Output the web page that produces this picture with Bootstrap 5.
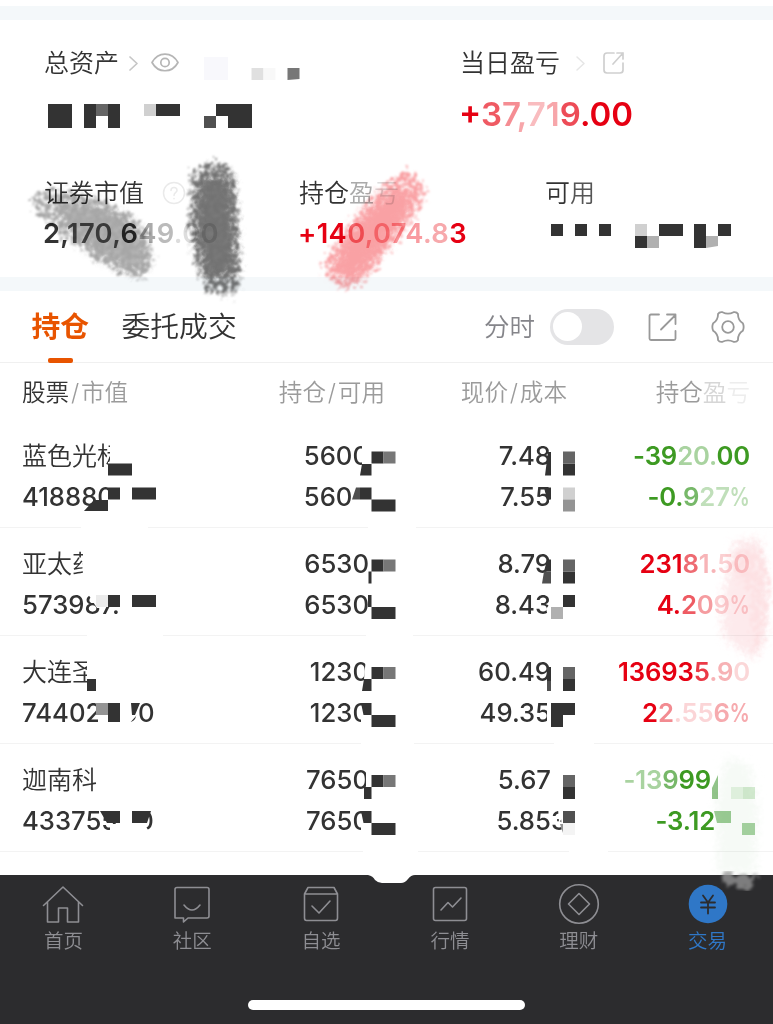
<!DOCTYPE html>
<html lang="zh-CN">
<head>
<meta charset="utf-8">
<meta name="viewport" content="width=device-width, initial-scale=1">
<title>持仓</title>
<link href="https://cdn.jsdelivr.net/npm/bootstrap@5.3.0/dist/css/bootstrap.min.css" rel="stylesheet">
<style>
body{width:773px;height:1024px;overflow:hidden;background:#fff;color:#333;font-family:Inter,"Noto Sans CJK SC",sans-serif;font-weight:350}
.screen{height:1024px;overflow:hidden}
.band{height:14px;background:#f4f8fa}
.assets{height:257px}
.lbl{font-size:25px;line-height:36px;height:36px;white-space:nowrap}
.amt{font-size:27.3px;font-weight:600;line-height:36px;white-space:nowrap;letter-spacing:.35px;margin-left:-1px}
.big{font-size:33px;line-height:40px;letter-spacing:0}
.up{color:#e60012}.down{color:#3d9a22}
.tabs{height:72px;border-bottom:1px solid #f0f0f0}
.tab{font-size:28.8px;line-height:74px}
.tab.on{color:#e85400;font-weight:600}
.tab.on::after{content:"";position:absolute;left:16px;bottom:1px;width:25px;height:5px;border-radius:2px;background:#e85400}
.minute{font-size:25.5px;color:#85858a;line-height:74px}
.knob{width:64px;height:36px;border-radius:18px;background:#e4e4e6;padding:3.5px 3px}
.knob::before{content:"";display:block;width:29px;height:29px;border-radius:50%;background:#fff}
.cols{display:grid;grid-template-columns:201px 162px 182px 183px;padding-left:22px;white-space:nowrap}
.heads{height:57px;font-size:23.6px;line-height:59px;color:#9b9b9b}
.heads i{font-style:normal;padding:0 1.8px}
.hold{height:107.9px;border-bottom:1px solid #f3f3f3;padding-top:16.4px;font-size:25.7px;font-weight:550;line-height:40.6px}
.hold .nm{font-size:25px;font-weight:350}
.num{text-align:right}
.up,.down{font-weight:600}
.num.up,.num.down{letter-spacing:-.15px}
.pc{display:inline-block;transform:scaleX(.79);transform-origin:right;margin-left:-5.5px}
.tabbar{height:149px;background:#2c2c2e;color:#8e8e93}
.tabbar svg{width:44px;height:44px}
.tabbar .item{padding-top:6.5px;font-size:19.5px;line-height:30px;position:relative;left:-1px}
.tabbar .now{color:#2f77c7}
.homebar{width:277px;height:9.5px;border-radius:5px;background:#fff;left:248px;top:1000px}
.marks{left:0;top:0;z-index:5;pointer-events:none}
.wash{mix-blend-mode:multiply;z-index:6}
svg{fill:none;stroke-linecap:round;stroke-linejoin:round}
</style>
<script src="https://cdn.jsdelivr.net/npm/bootstrap@5.3.0/dist/js/bootstrap.bundle.min.js"></script>
</head>
<body>
<div class="screen position-relative d-flex flex-column">
  <div style="height:6px"></div>
  <div class="band"></div>
  <section class="assets">
    <div class="d-flex" style="padding:25px 0 0 44px;height:133px">
      <div style="width:416px">
        <div class="lbl d-flex align-items-center"><span>总资产</span>
          <svg width="12" height="20" viewBox="0 0 12 20" stroke="#c6c6c6" stroke-width="1.7" style="margin-left:9px"><path d="M2 4l7 6.500-7 6.500"/></svg>
          <svg width="30" height="24" viewBox="0 0 30 24" stroke="#b5b5b5" stroke-width="1.7" style="margin-left:10px"><path d="M2 11.500C8 .2 22 .2 28 11.500C22 22.500 8 22.500 2 11.500z"/><circle cx="15" cy="11.500" r="4.200"/></svg>
        </div>
      </div>
      <div>
        <div class="lbl d-flex align-items-center"><span>当日盈亏</span>
          <svg width="12" height="20" viewBox="0 0 12 20" stroke="#e6e6e6" stroke-width="1.500" style="margin-left:15px"><path d="M2 4l7 6.500-7 6.500"/></svg>
          <svg width="24" height="24" viewBox="0 0 24 24" stroke="#cfcfcf" stroke-width="1.700" style="margin-left:15px"><path d="M12 2H5Q2 2 2 5V19Q2 22 5 22H18Q21 22 21 19V12M11 13L21 2M15 2h6v6"/></svg>
        </div>
        <div class="amt big up" style="margin-top:13px"><span>+</span><span style="color:#ef5a63">3</span><span style="color:#f58d93">7</span><span style="color:#f7a6aa">,</span><span style="color:#f9bcbf">7</span><span style="color:#f7a6aa">1</span><span style="color:#ed4c57">9</span>.00</div>
      </div>
    </div>
    <div class="d-flex" style="padding:22px 0 0 44px">
      <div style="width:255px">
        <div class="lbl d-flex align-items-center">证券市值
          <svg width="24" height="24" viewBox="0 0 24 24" stroke="#eaeaea" stroke-width="1.500" style="margin-left:18px"><circle cx="12" cy="12" r="10.500"/><path d="M9 9.500c0-4 6-4 6 0c0 2-3 2-3 5M12 17.500v.3"/></svg></div>
        <div class="amt" style="margin-top:5px">2,<span style="color:#555">170,</span>6<span style="color:#aaa">4</span><span style="color:#bbb">9</span><span style="color:#ddd">.00</span></div>
      </div>
      <div style="width:246px">
        <div class="lbl">持仓<span style="color:#aaa">盈</span><span style="color:#ddd">亏</span></div>
        <div class="amt up" style="margin-top:5px">+14<span style="color:#f4757c">0</span><span style="color:#f99ba0">,074</span><span style="color:#f7a9ac">.8</span>3</div>
      </div>
      <div class="lbl">可<span style="color:#555">用</span></div>
    </div>
  </section>
  <div class="band"></div>
  <nav class="tabs d-flex align-items-center">
    <div class="tab on position-relative" style="margin-left:31.500px;width:90px">持仓</div>
    <div class="tab" style="width:362.500px">委托成交</div>
    <div class="minute">分时</div>
    <div class="knob" style="margin-left:15px"></div>
    <svg width="32" height="32" viewBox="0 0 32 32" stroke="#999" stroke-width="1.800" style="margin-left:33px"><path d="M12 3.500H4Q2.500 3.500 2.500 5V27.500Q2.500 29 4 29H27Q28.500 29 28.500 27.500V20M14 18.500L28.500 4M20 3.500h8.500V13"/></svg>
    <svg width="34" height="34" viewBox="0 0 34 34" stroke="#999" stroke-width="1.800" style="margin-left:31.500px"><path d="M7 4Q8.500 1.500 11.500 2.200Q17 5 22.500 2.200Q25.500 1.500 27 4Q26.800 10 31.800 13.200Q33.500 17 31.800 20.800Q26.800 24 27 30Q25.500 32.500 22.500 31.800Q17 29 11.500 31.800Q8.500 32.500 7 30Q7.200 24 2.200 20.800Q.5 17 2.200 13.200Q7.200 10 7 4z"/><circle cx="17" cy="17" r="5.800"/></svg>
  </nav>
  <div class="cols heads">
    <div><span style="color:#333">股票</span><i>/</i>市值</div>
    <div class="num">持仓<i>/</i>可用</div>
    <div class="num">现价<i>/</i>成本</div>
    <div class="num">持仓<span style="color:#d6d6d6">盈</span><span style="color:#ededed">亏</span></div>
  </div>
  <div class="cols hold">
    <div><div class="nm">蓝色光标</div><div>418880</div></div>
    <div class="num" style="padding-right:16px"><div>5600</div><div>5600</div></div>
    <div class="num" style="padding-right:16px"><div>7.48</div><div>7.55</div></div>
    <div class="num down"><div>-39<span style="color:#a9d3a0">20.</span>00</div><div>-0.<span style="color:#77b869">9</span><span style="color:#c0dfba">27<span class="pc">%</span></span></div></div>
  </div>
  <div class="cols hold">
    <div><div class="nm">亚太药</div><div>573987.</div></div>
    <div class="num" style="padding-right:16px"><div>6530</div><div>6530</div></div>
    <div class="num" style="padding-right:16px"><div>8.79</div><div>8.43</div></div>
    <div class="num up"><div>231<span style="color:#ee6b72">8</span><span style="color:#f7b4b7">1.</span><span style="color:#fbd0d2">50</span></div><div>4.<span style="color:#ee5b63">2</span><span style="color:#f59ca0">0</span><span style="color:#fbd0d2">9<span class="pc">%</span></span></div></div>
  </div>
  <div class="cols hold">
    <div><div class="nm">大连圣</div><div>74402<span style="margin-left:20px">00</span></div></div>
    <div class="num" style="padding-right:16px"><div>1230</div><div>1230</div></div>
    <div class="num" style="padding-right:16px"><div>60.49</div><div>49.35</div></div>
    <div class="num up"><div>13693<span style="color:#eb3a47">5</span><span style="color:#f7b2b5">.9</span><span style="color:#fbd7d8">0</span></div><div>2<span style="color:#f28b91">2</span><span style="color:#fbd5d7">.55</span><span style="color:#f6aaae">6<span class="pc">%</span></span></div></div>
  </div>
  <div class="cols hold">
    <div><div class="nm">迦南科</div><div>433755<span style="margin-left:20px">0</span></div></div>
    <div class="num" style="padding-right:16px"><div>7650</div><div>7650</div></div>
    <div class="num"><div style="padding-right:16px">5.67</div><div>5.853</div></div>
    <div class="num down"><div style="padding-right:39px"><span style="color:#a9d3a0">-13</span><span style="color:#77b869">9</span>99</div><div style="padding-right:35px">-3.12</div></div>
  </div>
  <footer class="tabbar mt-auto d-flex text-center">
    <div class="item col-2"><svg class="d-block mx-auto" viewBox="0 0 44 44" stroke="currentColor" stroke-width="1.600"><path d="M2.500 23.500L22 5L41.500 23.500M6.500 20V40H17.500V26H26.500V40H37.500V20"/></svg>首页</div>
    <div class="item col-2"><svg class="d-block mx-auto" viewBox="0 0 44 44" stroke="currentColor" stroke-width="1.600"><path d="M7 5.500H37Q39 5.500 39 7.500V34Q39 36 37 36H18L13.500 40V36H5V7.500Q5 5.500 7 5.500zM14 23Q22 33 30 23"/></svg>社区</div>
    <div class="item col-2"><svg class="d-block mx-auto" viewBox="0 0 44 44" stroke="currentColor" stroke-width="1.600"><path d="M5.500 12L9 5.500H35L38.500 12V36Q38.500 38.500 36.500 38.500H7.500Q5.500 38.500 5.500 36zM5.500 12H38.500M13 24L20 31L31 19"/></svg>自选</div>
    <div class="item col-2"><svg class="d-block mx-auto" viewBox="0 0 44 44" stroke="currentColor" stroke-width="1.600"><rect x="5.500" y="5.500" width="33" height="33" rx="2"/><path d="M13 28L20 20.500L24.500 25L33 16"/></svg>行情</div>
    <div class="item col-2"><svg class="d-block mx-auto" viewBox="0 0 44 44" stroke="currentColor" stroke-width="1.600"><circle cx="22" cy="22" r="19.300"/><path d="M22 11.500L32.500 22L22 32.500L11.500 22z"/></svg>理财</div>
    <div class="item col-2 now"><svg class="d-block mx-auto" viewBox="0 0 44 44"><circle cx="22" cy="22" r="19.300" fill="currentColor"/><path d="M17 13.500L22 20.500L27 13.500M22 20.500V31.500M15 20.500H29M15 25.500H29" stroke="#2c2c2e" stroke-width="1.800"/></svg>交易</div>
  </footer>
  <div class="homebar position-absolute"></div>

  <!-- privacy mosaic over the figures -->
  <svg class="marks position-absolute" width="773" height="1024" viewBox="0 0 773 1024">
    <g fill="#fff">
      <path d="M110 440h30v24h-30zM108 462h50v50h-50zM81 520h67v12H81zM368 520h48v12h-48z"/>
      <path d="M83 545h25v38H83zM76 550l8-8v8zM120 590h40v30h-40zM87 630h76v12H87zM366 630h47v12h-47zM88 594h8l4 14h-3z"/>
      <path d="M87 655h22v36H87zM120 695h17v20l-9 10h-8zM98 715h10v10H98zM361 738h53v12h-53zM554 738h40v12h-40z"/>
      <path d="M120 808h12v26h-12zM110 824h6v10h-6zM132 823h12l4 7v4h-16zM363 846h55v12h-55zM569 846h39v12h-39z"/>
      <path d="M362 440h8v24h-8zM353 485h18v26h-18zM548 476h10v10h-10zM549 500h5v12h-5zM543 593h12v12h-6l-3 4 3 10h10v-26z"/>
      <path d="M366 657h5v22h-7zM361 715h10v12h-10zM547 700h4v26h-4zM366 766h5v20h-5zM361 823h10v12h-10zM558 808h6v7l-5 8zM561 815h4v20h-3z"/>
      <path d="M368 872V875Q373 876 375 880Q378 883 382 883H401Q405 883 408 879Q411 875 415 875V872z"/>
    </g>
    <g fill="#333">
      <path d="M48 104h24v24H48zM84 104h12v24H84zM108 104h12v24h-12zM156 104h24v12h-24zM216 104h36v24h-24v-12h-12z"/>
      <path d="M551 224h12v12h-12zM575 224h12v12h-12zM599 224h12v12h-12zM659 224h24v12h-24zM635 236h12v12h-12zM694 224h12v24h-12zM718 224h13v12h-13z"/>
      <path d="M108 463.500h24v12h-24zM108 487.500h12v12h-12zM132 487.500h24v12h-24zM84 511L94 500h14v11z"/>
      <path d="M371.500 451.500h12v12h-12zM360 475.500l2-11.500h9.500v11.500zM360 487.500h11.500v12H360zM371.500 499.500h24v12h-24z"/>
      <path d="M545 475.500l3-23.500h3v23.500zM563 463.500h12v12h-12zM544 487.500h7v12h-4z"/>
      <path d="M108 595h12v12h-12zM132 595h24v12h-24zM371.500 559.500h12v12h-12zM368.500 571.500h3v12h-3zM368 595h3.500v12H368zM371.500 607h24v12h-24z"/>
      <path d="M544 571.500l3-12h4v12zM563 571.500h12v12h-12zM563 595h12v12h-12z"/>
      <path d="M87 679h9v12h-9zM108 703h12v19h-12zM131 703h9l-5 12h-3zM371.500 667h12v12h-12zM362 691l2-12h7.500v12zM361 703h10.500v12h-8zM371.500 715h24v12h-24z"/>
      <path d="M547 667h4v14h-4zM563 679h12v12h-12zM551 703h24v12h-12v12h-12z"/>
      <path d="M100 811h20v12h-13zM132 811h19l-4 12h-15zM371.500 775h12v12h-12zM364 787h7.500v12H364zM361 811h10.500v12h-8zM371.500 823h24v12h-24zM563 787h12v12h-12z"/>
    </g>
    <g fill="#777"><path d="M383.500 451.500h12v12h-12zM383.500 559.500h12v12h-12zM383.500 667h12v12h-12zM383.500 775h12v12h-12zM287.500 68h12v11l-12 1z"/></g>
    <g fill="#656565"><path d="M96 104h12v12H96zM563 451.500h12v12h-12zM563 559.500h12v12h-12zM563 667h12v12h-12zM563 775h12v12h-12z"/></g>
    <g fill="#505050"><path d="M204 116h12v12h-12zM352 499.500l4-12h4v12zM542 583.500l2-12h7v12zM547 681h4v10h-4zM563 811h12v12h-12z"/></g>
    <g fill="#d0d0d0"><path d="M144 104h12v12h-12zM635 224h12v12h-12zM563 487.500h12v12h-12z"/></g>
    <g fill="#b0b0b0"><path d="M647 236h12v12h-12zM706 236h12v10l-12 2zM551 607h12v12h-12z"/></g>
    <path fill="#949494" d="M563 499.500h12v12h-12zM96 703h12v12H96zM560 824h3v9z"/>
    <path fill="#f8f8fc" d="M204 57h24v23h-24z"/><path fill="#e0e0e0" d="M251.500 68h12v12h-12z"/>
    <path fill="#f8f8f8" d="M263.500 68h12v12h-12z"/><path fill="#ebebeb" d="M96 595h12v12H96z"/><path fill="#f4f4f4" d="M563 823h12v12h-12z"/>
    <path fill="#92c48a" d="M712 788l6-13v24h-6z"/><path fill="#e6f4e4" d="M731 787h12v12h-12z"/><path fill="#d5ebd2" d="M743 787h12v12h-12z"/>
    <path fill="#9dcc96" d="M714 811h17v12h-14z"/><path fill="#a8d3a3" d="M742 823h13v12h-13z"/>
    <defs>
      <filter id="pale" x="-40%" y="-20%" width="180%" height="140%"><feTurbulence type="fractalNoise" baseFrequency=".13" numOctaves="3" seed="6"/><feDisplacementMap in="SourceGraphic" scale="18"/><feGaussianBlur stdDeviation="1.500"/></filter>
    </defs>
    <path d="M720 874h38l-2 8-14 6-18-3z" fill="#999" opacity=".75" filter="url(#pale)"/>
  </svg>
  <!-- brush strokes -->
  <svg class="marks wash position-absolute" width="773" height="1024" viewBox="0 0 773 1024">
    <defs>
      <filter id="rough" x="-30%" y="-30%" width="160%" height="160%">
        <feTurbulence type="fractalNoise" baseFrequency=".22" numOctaves="3" seed="4" result="n"/>
        <feDisplacementMap in="SourceGraphic" in2="n" scale="22" xChannelSelector="R" yChannelSelector="G" result="d"/>
        <feColorMatrix in="n" values="0 0 0 0 0  0 0 0 0 0  0 0 0 0 0  0 0 0 5 -1.700" result="grain"/>
        <feComposite in="d" in2="grain" operator="in"/><feGaussianBlur stdDeviation=".8"/>
      </filter>
      <filter id="core" x="-30%" y="-30%" width="160%" height="160%">
        <feGaussianBlur stdDeviation="4.500" result="b"/>
        <feTurbulence type="fractalNoise" baseFrequency=".2" numOctaves="2" seed="9" result="n"/>
        <feDisplacementMap in="b" in2="n" scale="14" xChannelSelector="R" yChannelSelector="G"/>
      </filter>
    </defs>
    <g id="grey-left" fill="#a6a6a6">
      <path d="M32 194L60 188L100 199L133 216L148 235L153 262L141 279L122 274L92 258L62 235L35 213z" filter="url(#rough)"/>
      <path d="M55 202L100 205L128 221L143 242L147 265L132 273L100 256L70 232z" filter="url(#core)" opacity=".85"/>
    </g>
    <g fill="#727272">
      <path d="M192 170L215 160L232 168L236 200L239 245L240 289L224 298L207 290L196 262L190 220z" filter="url(#rough)"/>
      <path d="M198 180L230 174L233 205L236 270L222 280L205 275L196 235z" filter="url(#core)" opacity=".95"/>
    </g>
    <g fill="#f9a1a4">
      <path d="M388 182L407 170L427 186L422 206L408 224L389 250L365 281L346 289L326 278L323 264L340 235L366 204z" filter="url(#rough)"/>
      <path d="M394 188L414 192L408 213L384 246L357 279L332 273L345 242L370 208z" filter="url(#core)"/>
    </g>
    <path d="M735 542L760 538L768 590L766 635L757 657L746 655L722 635L724 590z" fill="#fdeaec" filter="url(#core)"/>
    <path d="M732 552L757 546L768 570L768 600L761 650L752 650L750 590L732 575z" fill="#fde1e3" filter="url(#rough)"/>
    <path d="M726 757L750 765L758 810L755 874L718 874L716 800z" fill="#f6faf6" filter="url(#core)"/>
  </svg>
</div>
</body>
</html>
